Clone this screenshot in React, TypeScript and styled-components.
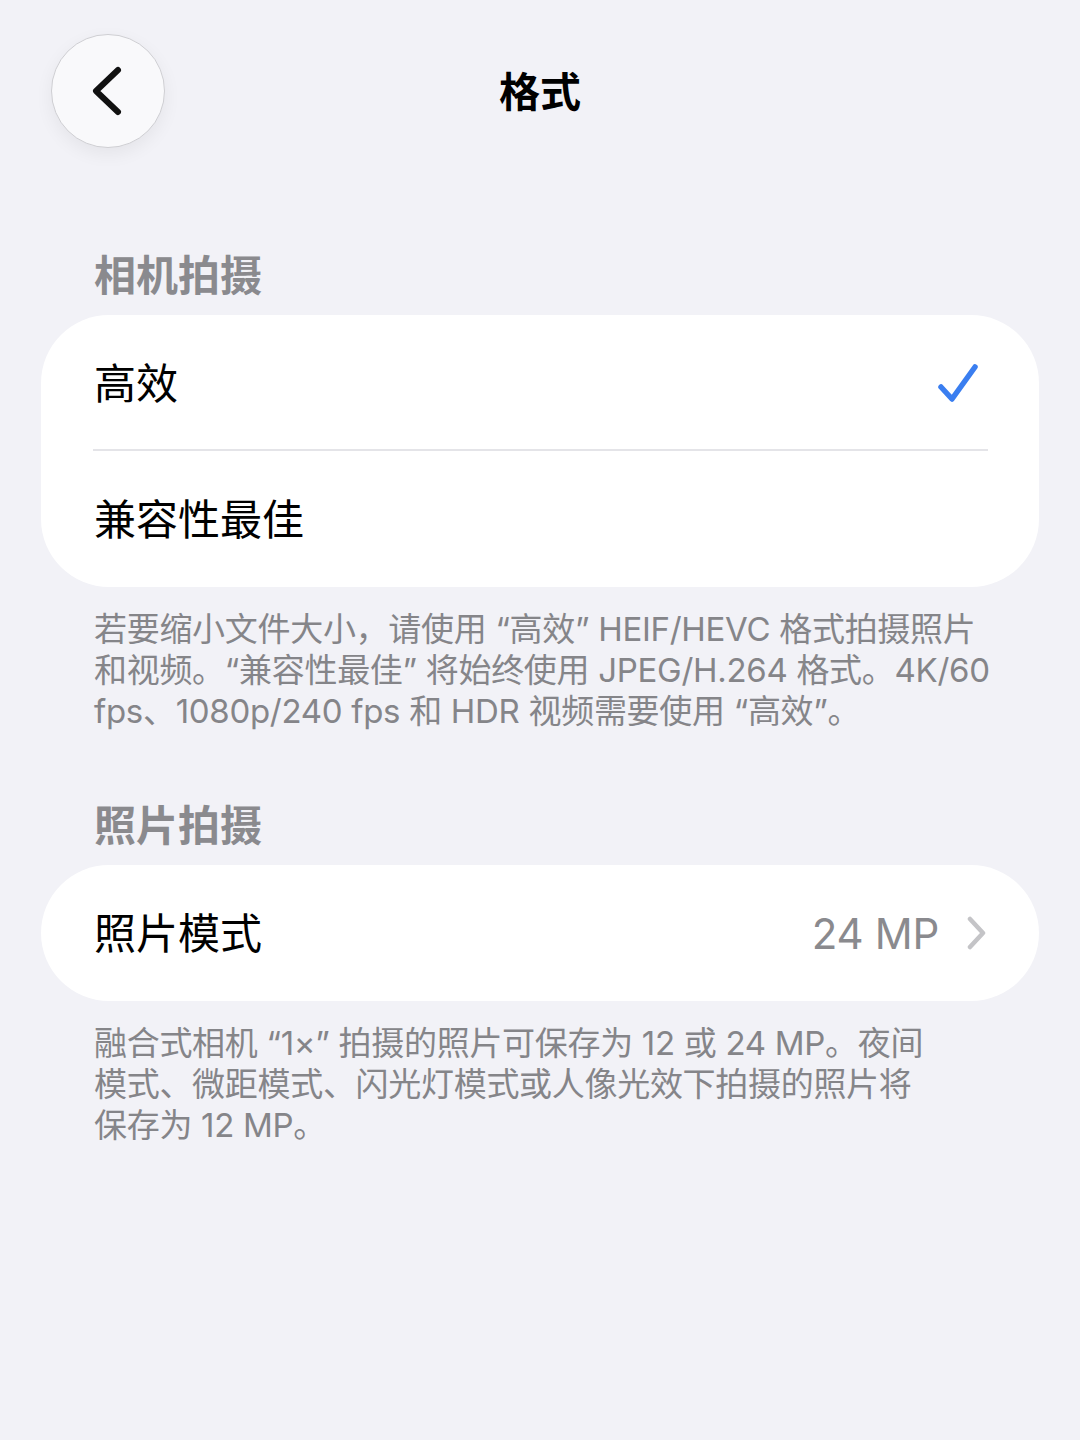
import React from "react";
import styled, { createGlobalStyle } from "styled-components";

const Global = createGlobalStyle`
  html, body { margin: 0; padding: 0; background: #f2f2f7; }
  body {
    font-family: "Inter", "Noto Sans CJK SC", sans-serif;
    -webkit-font-smoothing: antialiased;
  }
`;

const Page = styled.div`
  width: 1080px;
  min-height: 1440px;
  background: #f2f2f7;
  display: flex;
  flex-direction: column;
`;

const NavBar = styled.header`
  display: grid;
  grid-template-columns: 1fr auto 1fr;
  align-items: center;
  padding: 34px 51px 0;
  height: 114px;
`;

const BackButton = styled.button`
  width: 114px;
  height: 114px;
  border-radius: 50%;
  border: 1px solid #cfcfd3;
  background: #f9f9fb;
  box-shadow: 0 6px 18px rgba(0, 0, 0, 0.06);
  display: flex;
  align-items: center;
  justify-content: center;
  padding: 0;
  cursor: pointer;
`;

const Title = styled.h1`
  margin: 0 0 4px;
  font-family: "Noto Sans CJK SC", sans-serif;
  font-size: 41px;
  font-weight: 700;
  color: #000;
`;

const SectionHeader = styled.h2<{ $top: number }>`
  margin: ${(p) => p.$top}px 0 18px 94px;
  font-family: "Noto Sans CJK SC", sans-serif;
  font-size: 42px;
  line-height: 48px;
  font-weight: 700;
  color: #8a8a8e;
`;

const Card = styled.section`
  margin: 0 41px;
  background: #ffffff;
  border-radius: 68px;
  overflow: hidden;
`;

const Row = styled.div<{ $divider?: boolean }>`
  position: relative;
  height: 136px;
  display: flex;
  align-items: center;
  padding: 0 52px 0 53px;
  ${(p) =>
    p.$divider &&
    `&::after {
      content: "";
      position: absolute;
      left: 52px;
      right: 51px;
      bottom: 0;
      height: 2px;
      background: #e4e4e8;
    }`}
`;

const RowLabel = styled.span`
  flex: 1;
  font-family: "Noto Sans CJK SC", sans-serif;
  font-size: 42px;
  line-height: 50px;
  margin-bottom: 4px;
  color: #000;
`;

const RowValue = styled.span`
  font-family: "Inter", sans-serif;
  font-size: 42px;
  color: #8a8a8e;
  margin-right: 28px;
  letter-spacing: -0.3px;
`;

const Footer = styled.p`
  margin: 22px 60px 0 94px;
  font-size: 33px;
  line-height: 41px;
  color: #858589;
  letter-spacing: -0.3px;
`;

const Check = () => (
  <svg width="44" height="44" viewBox="0 0 44 44" style={{ marginRight: 6 }}>
    <path
      d="M4 26 L15 38 L38 6"
      fill="none"
      stroke="#3a7ef0"
      strokeWidth="5.5"
      strokeLinecap="round"
      strokeLinejoin="round"
    />
  </svg>
);

const Chevron = () => (
  <svg width="20" height="34" viewBox="0 0 20 34">
    <path
      d="M3 3 L16 17 L3 31"
      fill="none"
      stroke="#c4c4c7"
      strokeWidth="4.5"
      strokeLinecap="round"
      strokeLinejoin="round"
    />
  </svg>
);

const BackIcon = () => (
  <svg width="40" height="54" viewBox="0 0 40 54">
    <path
      d="M30 6 L8 27 L30 48"
      fill="none"
      stroke="#111"
      strokeWidth="6"
      strokeLinecap="round"
      strokeLinejoin="round"
    />
  </svg>
);

export default function App() {
  return (
    <Page>
      <Global />
      <NavBar>
        <div>
          <BackButton aria-label="返回">
            <BackIcon />
          </BackButton>
        </div>
        <Title>格式</Title>
        <div />
      </NavBar>

      <SectionHeader $top={101}>相机拍摄</SectionHeader>
      <Card>
        <Row $divider>
          <RowLabel>高效</RowLabel>
          <Check />
        </Row>
        <Row>
          <RowLabel>兼容性最佳</RowLabel>
        </Row>
      </Card>
      <Footer>
        若要缩小文件大小，请使用 “高效” HEIF/HEVC 格式拍摄照片
        <br />
        和视频。“兼容性最佳” 将始终使用 JPEG/H.264 格式。4K/60
        <br />
        fps、1080p/240 fps 和 HDR 视频需要使用 “高效”。
      </Footer>

      <SectionHeader $top={67}>照片拍摄</SectionHeader>
      <Card>
        <Row>
          <RowLabel>照片模式</RowLabel>
          <RowValue>24 MP</RowValue>
          <Chevron />
        </Row>
      </Card>
      <Footer>
        融合式相机 “1×” 拍摄的照片可保存为 12 或 24 MP。夜间
        <br />
        模式、微距模式、闪光灯模式或人像光效下拍摄的照片将
        <br />
        保存为 12 MP。
      </Footer>
    </Page>
  );
}
